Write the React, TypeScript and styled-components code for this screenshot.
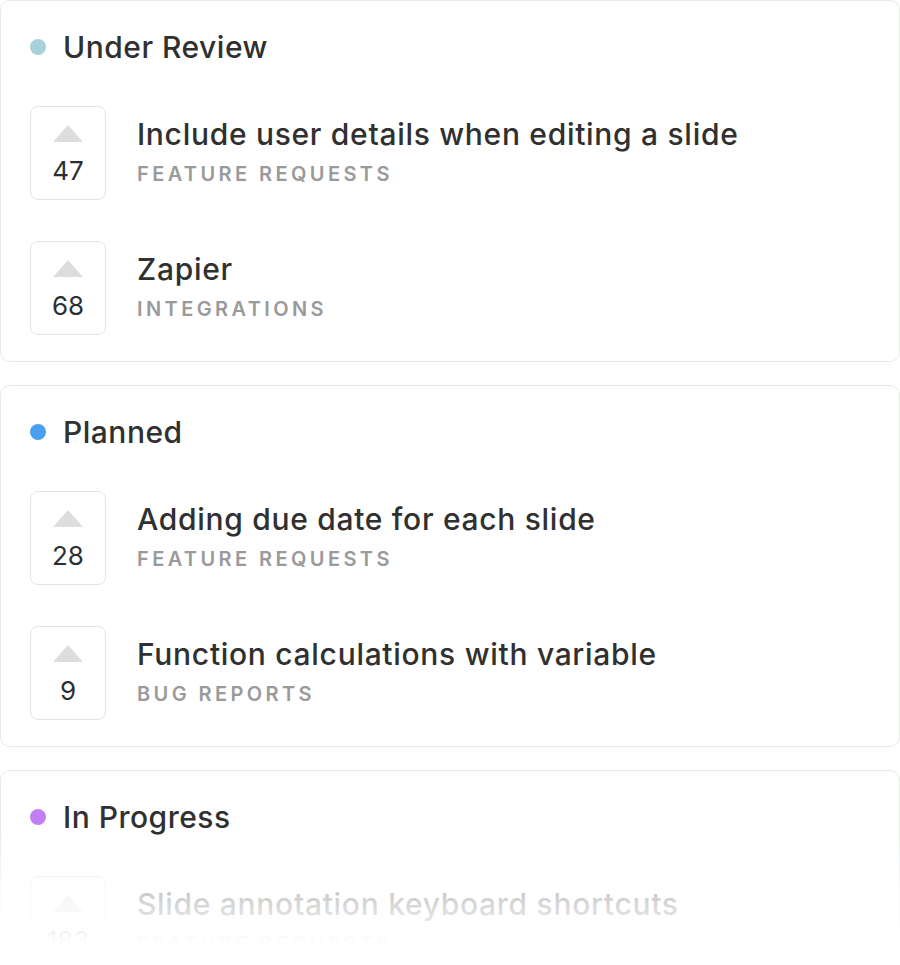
import React from 'react'
import styled, { createGlobalStyle } from 'styled-components'

const GlobalStyle = createGlobalStyle`
  html, body {
    margin: 0;
    padding: 0;
    background: #FFFFFF;
  }
  body {
    font-family: Inter, "Noto Sans", "Liberation Sans", sans-serif;
    color: #333333;
    -webkit-font-smoothing: antialiased;
  }
`

const Board = styled.div`
  position: relative;
  width: 900px;
  height: 965px;
  overflow: hidden;
  display: flex;
  flex-direction: column;
  gap: 23px;
`

const Fade = styled.div`
  position: absolute;
  left: 0;
  right: 0;
  bottom: 0;
  height: 130px;
  background: linear-gradient(to bottom, rgba(255,255,255,0) 0%, rgba(255,255,255,0.72) 40%, #FFFFFF 85%);
  pointer-events: none;
`

const Card = styled.section`
  box-sizing: border-box;
  width: 900px;
  border: 1px solid #e6ebe6;
  border-radius: 10px;
  background: #FFFFFF;
  padding: 28px 29px 26px 29px;
  display: flex;
  flex-direction: column;
  gap: 41px;
  flex-shrink: 0;
`

const Header = styled.div`
  display: flex;
  align-items: center;
  gap: 17px;
  height: 36px;
`

const Dot = styled.span<{ color: string }>`
  width: 16px;
  height: 16px;
  border-radius: 50%;
  background: ${props => props.color};
  flex-shrink: 0;
`

const HeaderTitle = styled.h2`
  margin: 0;
  font-size: 30px;
  font-weight: 500;
  line-height: 36px;
  letter-spacing: 0.5px;
  color: #303030;
`

const Rows = styled.div`
  display: flex;
  flex-direction: column;
  gap: 41px;
`

const Row = styled.div`
  display: flex;
  align-items: center;
  gap: 31px;
`

const VoteBox = styled.button`
  box-sizing: border-box;
  width: 76px;
  height: 94px;
  border: 1px solid #e4e4e4;
  border-radius: 8px;
  background: #FFFFFF;
  padding: 18px 0 0 0;
  display: flex;
  flex-direction: column;
  align-items: center;
  gap: 14px;
  cursor: pointer;
  flex-shrink: 0;
`

const Arrow = styled.span`
  width: 0;
  height: 0;
  border-left: 15px solid transparent;
  border-right: 15px solid transparent;
  border-bottom: 17px solid #dddddd;
`

const Count = styled.span`
  font-family: Inter, "Noto Sans", sans-serif;
  font-size: 26px;
  font-weight: 400;
  line-height: 30px;
  color: #2b2f33;
`

const Info = styled.div`
  display: flex;
  flex-direction: column;
  gap: 9px;
  margin-top: -4px;
`

const Title = styled.div`
  font-size: 30px;
  font-weight: 500;
  line-height: 36px;
  letter-spacing: 0.7px;
  color: #303030;
`

const Category = styled.div`
  font-size: 20px;
  font-weight: 600;
  line-height: 26px;
  letter-spacing: 3.4px;
  color: #9a9a9a;
  text-transform: uppercase;
`

interface Post {
  votes: number
  title: string
  category: string
}

interface Column {
  name: string
  color: string
  posts: Post[]
}

const columns: Column[] = [
  {
    name: 'Under Review',
    color: '#a9d1dc',
    posts: [
      { votes: 47, title: 'Include user details when editing a slide', category: 'Feature Requests' },
      { votes: 68, title: 'Zapier', category: 'Integrations' },
    ],
  },
  {
    name: 'Planned',
    color: '#4a9ff0',
    posts: [
      { votes: 28, title: 'Adding due date for each slide', category: 'Feature Requests' },
      { votes: 9, title: 'Function calculations with variable', category: 'Bug Reports' },
    ],
  },
  {
    name: 'In Progress',
    color: '#c27ff3',
    posts: [
      { votes: 183, title: 'Slide annotation keyboard shortcuts', category: 'Feature Requests' },
    ],
  },
]

const App: React.FC = () => {
  return (
    <>
      <GlobalStyle />
      <Board>
        {columns.map(col => (
          <Card key={col.name}>
            <Header>
              <Dot color={col.color} />
              <HeaderTitle>{col.name}</HeaderTitle>
            </Header>
            <Rows>
              {col.posts.map(post => (
                <Row key={post.title}>
                  <VoteBox>
                    <Arrow />
                    <Count>{post.votes}</Count>
                  </VoteBox>
                  <Info>
                    <Title>{post.title}</Title>
                    <Category>{post.category}</Category>
                  </Info>
                </Row>
              ))}
            </Rows>
          </Card>
        ))}
        <Fade />
      </Board>
    </>
  )
}

export default App
